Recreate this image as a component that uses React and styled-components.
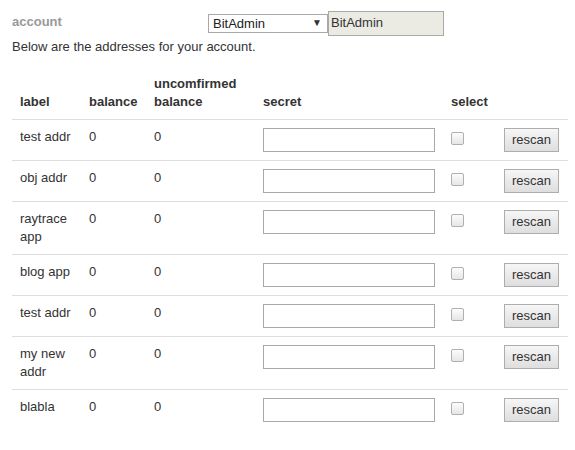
import React from 'react';
import styled, { createGlobalStyle } from 'styled-components';

const GlobalStyle = createGlobalStyle`
  body {
    margin: 0;
    background: #fff;
    font-family: "Liberation Sans", Arial, sans-serif;
    font-size: 13px;
    line-height: 18px;
    color: #333;
  }
`;

const Page = styled.div`
  padding: 11px 7px 0 12px;
`;

const AccountRow = styled.div`
  display: flex;
  align-items: center;
  height: 25px;
`;

const AccountLabel = styled.label`
  width: 196px;
  padding-bottom: 4px;
  font-weight: bold;
  color: #999;
`;

const SelectWrap = styled.div`
  position: relative;
  display: flex;
`;

const Select = styled.select`
  appearance: none;
  width: 120px;
  height: 19px;
  margin: 0;
  padding: 0 0 0 4px;
  border: 1px solid #a9a9a9;
  border-radius: 0;
  background: #fff;
  font: 13px/17px "Liberation Sans", Arial, sans-serif;
  color: #222;
  outline: none;
`;

const Caret = styled.span`
  position: absolute;
  right: 6px;
  top: 3px;
  font-size: 10px;
  line-height: 12px;
  color: #333;
  pointer-events: none;
`;

const ReadField = styled.input`
  box-sizing: border-box;
  width: 116px;
  height: 25px;
  margin: 0;
  padding: 0 2px 2px;
  border: 1px solid #a9a9a9;
  background: #ebebe4;
  font: 13px "Liberation Sans", Arial, sans-serif;
  color: #333;
  outline: none;
`;

const Intro = styled.p`
  margin: 2px 0 11px;
`;

const Table = styled.table`
  width: 556px;
  table-layout: fixed;
  border-collapse: collapse;
`;

const Th = styled.th`
  padding: 8px;
  text-align: left;
  vertical-align: bottom;
  font-weight: bold;
  color: #333;
`;

const Td = styled.td`
  padding: 8px;
  border-top: 1px solid #ddd;
  vertical-align: top;
`;

const SecretInput = styled.input`
  box-sizing: border-box;
  width: 172px;
  height: 24px;
  margin: 0;
  padding: 0 4px;
  border: 1px solid #a9a9a9;
  background: #fff;
  outline: none;
`;

const Check = styled.input.attrs({ type: 'checkbox' })`
  appearance: none;
  box-sizing: border-box;
  width: 13px;
  height: 13px;
  margin: 4px 0 0;
  border: 1px solid #b0b0b0;
  border-radius: 2px;
  background: linear-gradient(#fcfcfc, #e6e6e6);
  display: block;
`;

const Button = styled.button`
  box-sizing: border-box;
  height: 24px;
  margin: 0;
  padding: 0 7px 1px;
  border: 1px solid #adadad;
  border-radius: 0;
  background: linear-gradient(#f6f6f6, #dedede);
  font: 13px "Liberation Sans", Arial, sans-serif;
  color: #333;
`;

const rows = ['test addr', 'obj addr', 'raytrace app', 'blog app', 'test addr', 'my new addr', 'blabla'];
const widths = [69, 65, 109, 188, 53, 72];

export default function App() {
  return (
    <Page>
      <GlobalStyle />
      <AccountRow>
        <AccountLabel>account</AccountLabel>
        <SelectWrap>
          <Select defaultValue="BitAdmin">
            <option>BitAdmin</option>
          </Select>
          <Caret>▼</Caret>
        </SelectWrap>
        <ReadField readOnly value="BitAdmin" />
      </AccountRow>
      <Intro>Below are the addresses for your account.</Intro>
      <Table>
        <colgroup>
          {widths.map((w, i) => <col key={i} style={{ width: w }} />)}
        </colgroup>
        <thead>
          <tr>
            <Th>label</Th>
            <Th>balance</Th>
            <Th>uncomfirmed balance</Th>
            <Th>secret</Th>
            <Th>select</Th>
            <Th />
          </tr>
        </thead>
        <tbody>
          {rows.map((label, i) => (
            <tr key={i}>
              <Td>{label}</Td>
              <Td>0</Td>
              <Td>0</Td>
              <Td><SecretInput /></Td>
              <Td><Check /></Td>
              <Td><Button>rescan</Button></Td>
            </tr>
          ))}
        </tbody>
      </Table>
    </Page>
  );
}
